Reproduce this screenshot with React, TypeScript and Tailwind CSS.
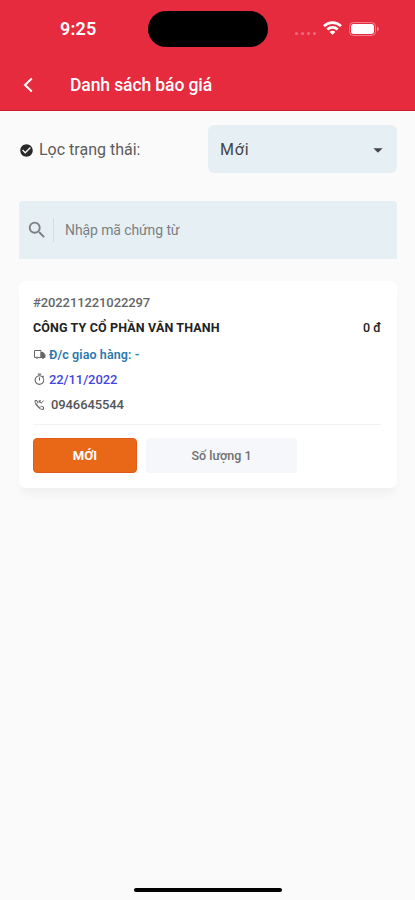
import type { ReactNode } from "react";
import { MdCheckCircle, MdSearch, MdArrowDropDown, MdOutlineTimer } from "react-icons/md";

function StatusBar() {
  return (
    <div className="flex h-[58px] items-center">
      <span className="ml-[60px] w-[88px] text-[18px] font-semibold leading-[20px] tracking-[0.2px]">9:25</span>
      <div className="h-[36px] w-[120px] rounded-full bg-black" />
      <div className="ml-[27px] mt-[8px] flex gap-[3px]">
        {[0, 1, 2, 3].map((i) => (
          <i key={i} className="size-[3px] rounded-full bg-white/30" />
        ))}
      </div>
      <svg className="ml-[7px] mt-[-2px]" width="19" height="14" viewBox="0 0 19 14" fill="none" stroke="white" strokeWidth="2.7">
        <path d="M1 5.1C5.8.5 13.2.5 18 5.1" />
        <path d="M4.3 8.4c3-2.8 7.400-2.8 10.400 0" />
        <path d="M9.500 13.800 6.600 10.900c1.600-1.500 4.200-1.500 5.800 0Z" fill="white" stroke="none" />
      </svg>
      <svg className="ml-[7px] mt-[-1px]" width="31" height="14" viewBox="0 0 31 14">
        <rect x=".5" y=".5" width="26" height="13" rx="4" fill="none" stroke="white" strokeOpacity=".4" />
        <rect x="2" y="2" width="23" height="10" rx="2.700" fill="white" />
        <path d="M28 4.800c2.500.800 2.500 3.600 0 4.400Z" fill="white" fillOpacity=".5" />
      </svg>
    </div>
  );
}

function InfoRow({ icon, children }: { icon: ReactNode; children: ReactNode }) {
  return (
    <div className="flex h-[25px] items-center">
      <span className="flex w-[16px] shrink-0 items-center text-[#666]">{icon}</span>
      {children}
    </div>
  );
}

function TruckIcon() {
  return (
    <svg width="13" height="11" viewBox="0 0 13 11" fill="none" stroke="currentColor" strokeWidth="1">
      <path d="M3 8.500H1.500V1.500h6.500v7H5" />
      <path d="M8 3.500h2.200L12 5.700v2.800H8Z" fill="currentColor" />
      <circle cx="4" cy="8.700" r=".8" />
      <circle cx="10" cy="8.700" r=".8" fill="currentColor" />
    </svg>
  );
}

function CallIcon() {
  return (
    <svg width="13" height="12" viewBox="0 0 13 12" fill="none" stroke="currentColor" strokeWidth="1">
      <path d="M2 1.500h2l.6 2.300-1.300 1.100c.8 1.700 2 2.900 3.700 3.700l1.200-1.300 2.300.7v2.500C6 10.500 2 6.200 2 1.500Z" />
      <path d="M6 4V1.800h2M6.200 2l2 2.200 2.500-2.700" />
    </svg>
  );
}

export default function App() {
  return (
    <div className="flex h-[900px] w-[415px] flex-col overflow-hidden bg-[#fafafa] font-[Roboto,'Liberation_Sans',sans-serif] whitespace-nowrap">
      <header className="h-[111px] border-b border-[#cf1c2c] bg-[#e62b3e] text-white">
        <StatusBar />
        <div className="flex h-[53px] items-center">
          <svg className="ml-[23px]" width="10" height="16" viewBox="0 0 10 16" fill="none" stroke="white" strokeWidth="2">
            <path d="M8.800 1.500 2 8l6.800 6.500" />
          </svg>
          <h1 className="ml-[37px] text-[17.500px] font-medium leading-[22px] tracking-[-0.1px]">Danh sách báo giá</h1>
        </div>
      </header>

      <main className="pl-[19px] pr-[18px] pt-[14px]">
        <div className="flex h-[48px] items-center">
          <MdCheckCircle className="mt-[2px] size-[15px] text-[#292929]" />
          <span className="ml-[5px] mt-[2px] flex-1 text-[16px] text-[#5c5c5c]">Lọc trạng thái:</span>
          <div className="flex h-[48px] w-[189px] items-center justify-between rounded-[6px] bg-[#e6eff4] pl-[12px] pr-[8px] text-[#444]">
            <span className="mt-[2px] text-[16px] tracking-[0.8px]">Mới</span>
            <MdArrowDropDown className="mt-[2px] size-[22px]" />
          </div>
        </div>

        <div className="mt-[28px] flex h-[58px] items-center rounded-t-[4px] bg-[#e6eff4] text-[#7b7f82]">
          <MdSearch className="ml-[7px] size-[22px]" />
          <div className="ml-[5px] h-[24px] w-px bg-[#d5dde2]" />
          <span className="ml-[11px] text-[14px] tracking-[-0.1px]">Nhập mã chứng từ</span>
        </div>

        <section className="mt-[22px] h-[207px] rounded-[7px] bg-white pl-[14px] pr-[16px] pt-[9px] text-[13px] shadow-[0_9px_8px_-3px_rgba(0,0,0,0.045)]">
          <div className="flex h-[25px] items-center font-medium tracking-[-0.1px] text-[#666]">#202211221022297</div>
          <div className="flex h-[25px] items-center justify-between pt-[2px] text-[#222]">
            <span className="text-[12.500px] font-bold tracking-[0.14px]">CÔNG TY CỔ PHẦN VÂN THANH</span>
            <span className="text-[12.500px] font-medium">0 đ</span>
          </div>
          <div className="h-[2px]" />
          <InfoRow icon={<TruckIcon />}>
            <span className="pt-[2px] text-[12.500px] font-semibold tracking-[0.1px] text-[#2a78ad]">Đ/c giao hàng: -</span>
          </InfoRow>
          <InfoRow icon={<MdOutlineTimer className="size-[13px]" />}>
            <span className="font-medium tracking-[-0.1px] text-[#4348dc]">22/11/2022</span>
          </InfoRow>
          <InfoRow icon={<CallIcon />}>
            <span className="ml-[2px] font-medium tracking-[-0.1px] text-[#555]">0946645544</span>
          </InfoRow>
          <div className="mt-[7px] h-px bg-[#f2f2f2]" />
          <div className="mt-[13px] flex gap-[9px]">
            <div className="flex h-[35px] w-[104px] items-center justify-center rounded-[4px] border border-[#e05a1c] bg-[#e96818] pt-px text-[13px] font-bold text-white">MỚI</div>
            <div className="flex h-[35px] w-[151px] items-center justify-center rounded-[4px] bg-[#f5f7fa] pt-px text-[12.500px] font-medium text-[#707070]">Số lượng 1</div>
          </div>
        </section>
      </main>
      <div className="mx-auto mt-auto mb-[8px] h-[4px] w-[148px] rounded-full bg-black" />
    </div>
  );
}
